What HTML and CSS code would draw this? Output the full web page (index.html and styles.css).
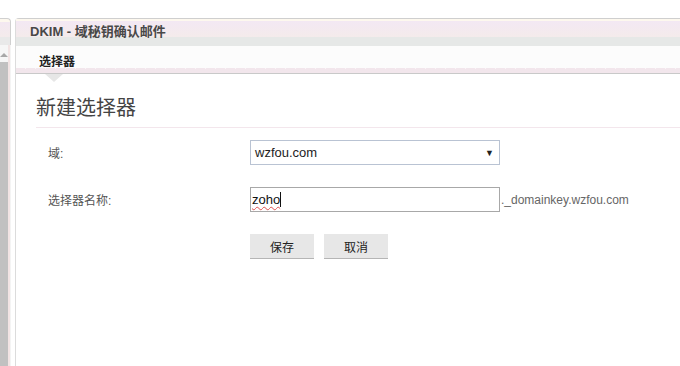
FILE: index.html
```html
<!DOCTYPE html>
<html>
<head>
<meta charset="utf-8">
<link rel="stylesheet" href="styles.css">
</head>
<body>
<div class="page">
  <div class="side">
    <div class="side-head"></div>
    <div class="side-body">
      <div class="scroll">
        <div class="scroll-arrow"></div>
        <div class="scroll-track"></div>
      </div>
      <div class="side-strip"></div>
    </div>
  </div>
  <div class="main">
    <div class="titlebar">DKIM - 域秘钥确认邮件</div>
    <div class="tabbar"><span class="tab">选择器</span></div>
    <div class="tabedge"></div>
    <div class="pointer"></div>
    <div class="content">
      <h1 class="heading">新建选择器</h1>
      <div class="form">
        <div class="row">
          <label class="label">域:</label>
          <div class="select"><span>wzfou.com</span><span class="arrow">▼</span></div>
        </div>
        <div class="row row2">
          <label class="label">选择器名称:</label>
          <div class="input"><span class="typed">zoho</span><span class="caret"></span></div>
          <span class="suffix">._domainkey.wzfou.com</span>
        </div>
        <div class="row row3">
          <span class="label"></span>
          <button class="btn">保存</button>
          <button class="btn">取消</button>
        </div>
      </div>
    </div>
  </div>
</div>
</body>
</html>
```

FILE: styles.css
```css
html, body {
  margin: 0;
  padding: 0;
  background: #fff;
  font-family: "Liberation Sans", "Noto Sans CJK SC", sans-serif;
}
.page {
  display: flex;
  height: 366px;
  overflow: hidden;
  padding-top: 18px;
  box-sizing: border-box;
}
.side {
  width: 11px;
  flex: none;
  display: flex;
  flex-direction: column;
  margin-right: 4px;
}
.side-head {
  height: 27px;
  border-top: 1px solid #d0d0d0;
  border-right: 1px solid #d0d0d0;
  border-top-right-radius: 4px;
  background: linear-gradient(#fdf8ee 0, #fdf8ee 3px, #f3e8f2 3px, #f4ebeb 18px, #e9e9e9 18px);
  box-sizing: border-box;
}
.side-body {
  flex: 1;
  display: flex;
}
.scroll {
  width: 8px;
  display: flex;
  flex-direction: column;
  background: #f6f6f6;
}
.scroll-arrow {
  height: 17px;
  position: relative;
}
.scroll-arrow::after {
  content: "";
  position: absolute;
  left: 0;
  top: 8px;
  border-left: 4px solid transparent;
  border-right: 4px solid transparent;
  border-bottom: 4px solid #a8a8a8;
}
.scroll-track {
  flex: 1;
  background: #c1c1c1;
}
.side-strip {
  width: 2px;
  background: #f2e4e4;
  border-right: 1px solid #f4f4f4;
}
.main {
  flex: 1;
  border-top: 1px solid #cfcfcf;
  border-left: 1px solid #dcdcdc;
  border-top-left-radius: 4px;
  display: flex;
  flex-direction: column;
}
.titlebar {
  height: 27px;
  box-sizing: border-box;
  padding: 5px 0 0 14px;
  font-size: 13px;
  font-weight: bold;
  color: #484848;
  background: linear-gradient(#fdf8ee 0, #fdf8ee 2px, #f3e8f3 2px, #f4ebeb 18px, #e6e8e7 18px);
  line-height: 15px;
}
.tabbar {
  height: 22px;
  background: #fcfcfc;
  padding-left: 23px;
  box-sizing: border-box;
  padding-top: 6px;
}
.tab {
  font-size: 12px;
  font-weight: bold;
  color: #222;
  line-height: 14px;
}
.tabedge {
  height: 5px;
  border-bottom: 1px solid #c9c9c9;
  background-image: repeating-linear-gradient(90deg, transparent 0, transparent 9px, #fbf6f8 9px, #fbf6f8 10px);
  background-size: 100% 1px;
  background-repeat: no-repeat;
  background-color: #f2e6ec;
}
.pointer {
  width: 0;
  height: 0;
  margin-left: 29px;
  border-left: 9px solid transparent;
  border-right: 9px solid transparent;
  border-top: 8px solid #e6e6e6;
}
.content {
  padding-left: 20px;
}
.heading {
  margin: 0;
  font-size: 20px;
  font-weight: normal;
  color: #444;
  line-height: 24px;
  padding-top: 14px;
  padding-bottom: 7px;
  border-bottom: 1px solid #f3e6ec;
}
.form {
  padding-left: 12px;
  padding-top: 12px;
}
.row {
  display: flex;
  align-items: center;
  height: 25px;
}
.row2 {
  margin-top: 22px;
}
.row3 {
  margin-top: 22px;
}
.label {
  width: 202px;
  flex: none;
  font-size: 12px;
  color: #555;
}
.select {
  width: 250px;
  height: 25px;
  box-sizing: border-box;
  border: 1px solid #b9c3d3;
  display: flex;
  align-items: center;
  justify-content: space-between;
  padding: 0 5px 0 4px;
  font-size: 13px;
  color: #222;
}
.arrow {
  font-size: 9px;
  color: #222;
}
.input {
  width: 250px;
  height: 25px;
  box-sizing: border-box;
  border: 1px solid #a8a8a8;
  display: flex;
  align-items: center;
  padding-left: 1px;
  font-size: 13px;
  color: #111;
}
.typed {
  text-decoration: underline wavy #e05050;
  text-decoration-thickness: 1px;
  text-underline-offset: 2px;
}
.caret {
  width: 1px;
  height: 15px;
  background: #111;
}
.suffix {
  font-size: 12px;
  color: #666;
  margin-left: 1px;
}
.btn {
  width: 64px;
  height: 25px;
  margin: 0 10px 0 0;
  padding: 0;
  border: none;
  border-bottom: 1px solid #b5b5b5;
  background: #e7e7e7;
  font-family: "Liberation Sans", "Noto Sans CJK SC", sans-serif;
  font-size: 12px;
  color: #222;
}
```
